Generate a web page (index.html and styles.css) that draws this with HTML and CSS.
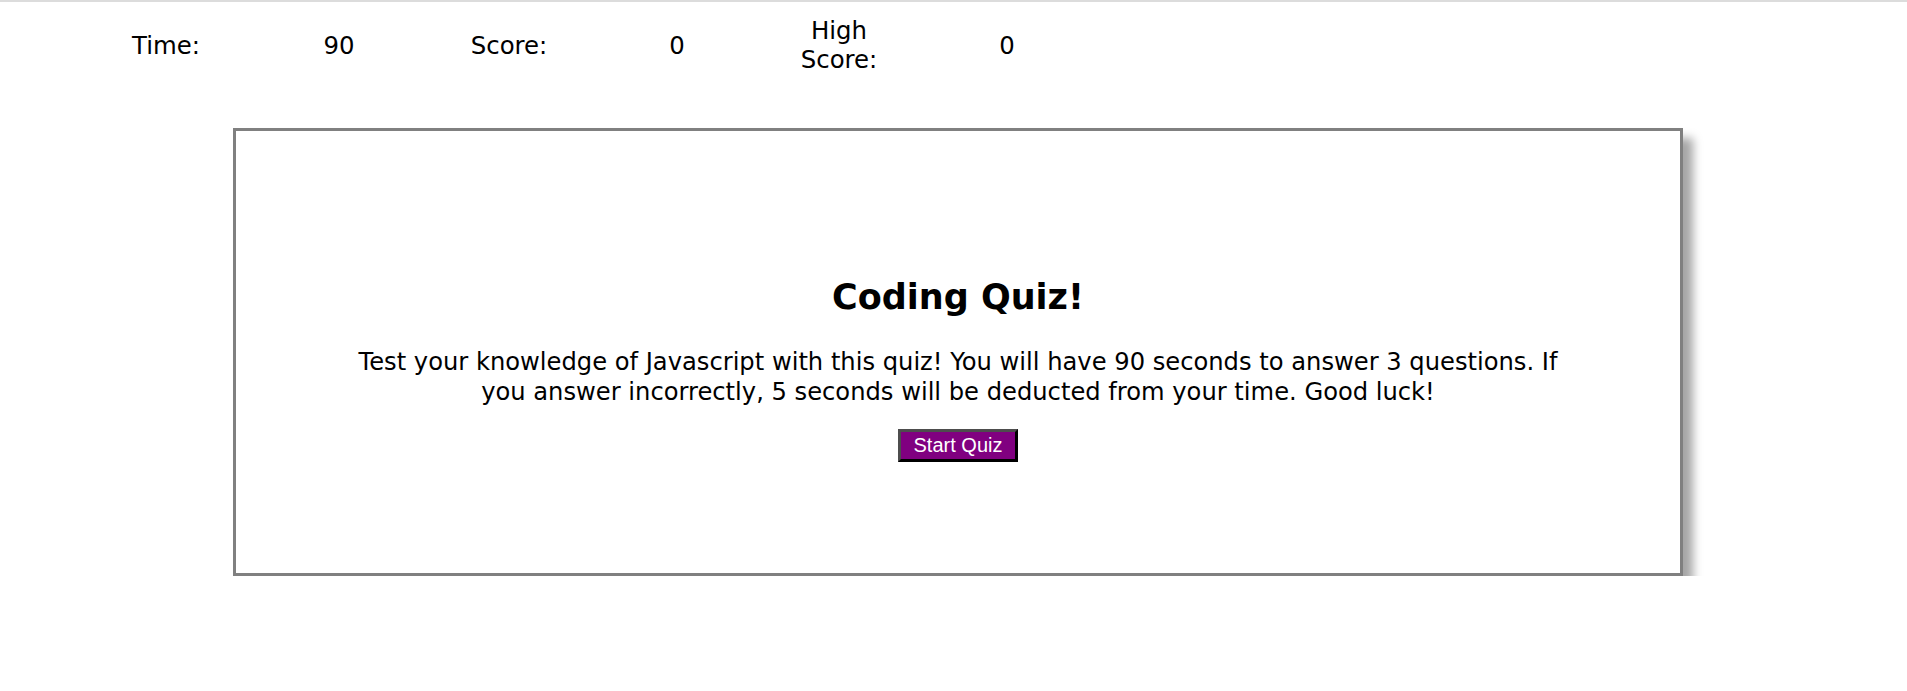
FILE: index.html
```html
<!DOCTYPE html>
<html lang="en">
<head>
<meta charset="utf-8">
<title>Coding Quiz</title>
<link rel="stylesheet" href="styles.css">
</head>
<body>
<div class="topline"></div>
<header class="stats">
  <div class="stat">Time:</div>
  <div class="stat">90</div>
  <div class="stat">Score:</div>
  <div class="stat">0</div>
  <div class="stat">High Score:</div>
  <div class="stat">0</div>
</header>
<main class="card">
  <h1 class="title">Coding Quiz!</h1>
  <p class="intro">Test your knowledge of Javascript with this quiz! You will have 90 seconds to answer 3 questions. If you answer incorrectly, 5 seconds will be deducted from your time. Good luck!</p>
  <button class="start">Start Quiz</button>
</main>
</body>
</html>
```
FILE: styles.css
```css
html, body {
  margin: 0;
  padding: 0;
  background: #fff;
}
body {
  font-family: "DejaVu Sans", Verdana, sans-serif;
  color: #000;
}
.topline {
  height: 2px;
  background: #dcdcdc;
}
.stats {
  display: flex;
  align-items: center;
  height: 86px;
  padding-left: 116px;
  font-size: 24.4px;
}
.stat {
  width: 100px;
  text-align: center;
}
.stat:nth-child(2) { margin-left: 73px; }
.stat:nth-child(3) { margin-left: 70px; }
.stat:nth-child(4) { margin-left: 68px; }
.stat:nth-child(5) { margin-left: 62px; }
.stat:nth-child(6) { margin-left: 68px; }
.card {
  box-sizing: border-box;
  width: 1450px;
  height: 448px;
  margin: 40px 0 0 233px;
  border: 3px solid #808080;
  box-shadow: 10px 10px 9px #a6a6a6;
  display: flex;
  flex-direction: column;
  align-items: center;
  padding-top: 146px;
}
.title {
  margin: 0;
  font-size: 35px;
  font-weight: bold;
}
.intro {
  margin: 30px 0 0;
  max-width: 1230px;
  font-size: 24.2px;
  line-height: 30px;
  text-align: center;
}
.start {
  margin-top: 22px;
  font-family: "Liberation Sans", Arial, sans-serif;
  font-size: 20px;
  color: #fff;
  background: #800080;
  border: 3px solid;
  border-color: #4d4d4d #000 #000 #4d4d4d;
  padding: 2px 13px;
  line-height: 23px;
}
```
